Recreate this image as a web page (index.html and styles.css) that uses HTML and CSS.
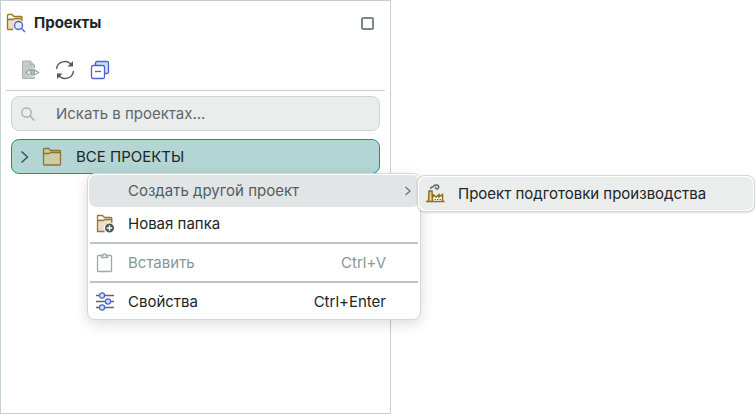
FILE: index.html
```html
<!DOCTYPE html>
<html lang="ru">
<head>
<meta charset="utf-8">
<title>Проекты</title>
<link rel="stylesheet" href="styles.css">
</head>
<body>
<main class="panel">
  <header class="panel-header">
    <svg class="icon-title" width="20" height="20" viewBox="0 0 20 20" fill="none">
      <path d="M2 5h14v5H8v7H2z" fill="#eadfc4"/>
      <path d="M1.500 16.500V2.500q0-1 1-1H6l2 2h7q1 0 1 1V8M1.500 6.500H7l2-1h6.500M1.500 16.500H7" stroke="#9a762b" stroke-width="1.300"/>
      <circle cx="12.500" cy="12.500" r="4" fill="#e4e9fb" stroke="#4a66d0" stroke-width="1.400"/>
      <path d="m15.500 15.500 3.500 3.500" stroke="#4a66d0" stroke-width="1.400"/>
    </svg>
    <h1 class="panel-title">Проекты</h1>
    <button class="icon-button" type="button" aria-label="Развернуть">
      <svg width="13" height="13" viewBox="0 0 13 13" fill="none"><rect x="1" y="1" width="11" height="11" rx="1" stroke="#7c8787" stroke-width="2"/></svg>
    </button>
  </header>
  <div class="toolbar">
    <button class="icon-button" type="button" aria-label="Просмотр" disabled>
      <svg width="20" height="20" viewBox="0 0 20 20" fill="none">
        <path d="M2.500 1h8l4 4v3.500c-4-.5-6.500 1-8.500 4 1.500 2.500 4 4 9 4.200V18.500H2.500z" fill="#c4cbcb"/>
        <path d="M14.500 8V5l-4-4H3q-.5 0-.5.500V18q0 .5.500.5h11.500v-1.500M10.500 1v4h4" stroke="#a9b3b3"/>
        <path d="M6 12.500q5.500-6 12.500 0-6.500 5.500-12.500 0z" fill="#fff" stroke="#9ba6a6" stroke-width="1.200"/>
        <circle cx="12.500" cy="12" r="2" fill="#c4cbcb" stroke="#8c9898" stroke-width="1.200"/>
      </svg>
    </button>
    <button class="icon-button" type="button" aria-label="Обновить">
      <svg width="20" height="20" viewBox="0 0 20 20" fill="none" stroke="#4f5b5c" stroke-width="1.400">
        <path d="M1.500 9a8.300 8.300 0 0 1 15-4M18.500 11a8.300 8.300 0 0 1-15 4"/>
        <path d="M18 1v5.500h-5.500zM2 19v-5.500h5.500z" fill="#4f5b5c" stroke="none"/>
      </svg>
    </button>
    <button class="icon-button" type="button" aria-label="Свернуть все">
      <svg width="20" height="20" viewBox="0 0 20 20" fill="none" stroke="#4a62cf" stroke-width="1.300">
        <rect x="5.500" y="1.500" width="13" height="12" rx="1.500" fill="#d3dcfa"/>
        <rect x="1.500" y="5.500" width="13" height="13" rx="1.500" fill="#fff"/>
        <path d="M5 11.500h6"/>
      </svg>
    </button>
  </div>
  <div class="panel-body">
    <label class="search">
      <svg width="16" height="16" viewBox="0 0 16 16" fill="none" stroke="#a0aaaa" stroke-width="1.200"><circle cx="6.500" cy="6.500" r="4.700"/><path d="m10 10 4.500 4.500"/></svg>
      <input class="search-input" type="text" placeholder="Искать в проектах..." aria-label="Искать в проектах">
    </label>
    <div class="tree">
      <button class="tree-row" type="button">
        <svg width="10" height="14" viewBox="0 0 10 14" fill="none" stroke="#435354" stroke-width="1.500"><path d="m1.500 1.500 6 5.500-6 5.500"/></svg>
        <svg width="20" height="20" viewBox="0 0 20 20" fill="none">
          <path d="M1.500 2q0-.5.500-.5h4.500l2 2h9q1 0 1 1v13.500h-17z" fill="#c9cda9"/>
          <path d="M1.500 17V2.500q0-1 1-1h4l2 2h9q1 0 1 1V17q0 1-1 1h-15q-1 0-1-1zM1.500 6.500h5.500l2-1h9.500" stroke="#8f722c" stroke-width="1.300"/>
        </svg>
        <span>ВСЕ ПРОЕКТЫ</span>
      </button>
      <div class="popup menu" role="menu">
        <button class="item active" type="button" role="menuitem">
          <span class="slot"></span>
          <span class="label">Создать другой проект</span>
          <svg class="arrow" width="8" height="12" viewBox="0 0 8 12" fill="none" stroke="#687374" stroke-width="1.300"><path d="m1.500 2 4.500 4-4.500 4"/></svg>
        </button>
        <button class="item" type="button" role="menuitem">
          <svg class="slot" width="20" height="20" viewBox="0 0 20 20" fill="none">
            <path d="M2 5h13.500v12H2z" fill="#eadfc4"/>
            <path d="M8.500 17.500h-7V2q0-.5.500-.5h4.500l2 2h6.500q.8 0 .8 1V9M1.500 6.500H7l2-1h6.800" stroke="#9a762b" stroke-width="1.300"/>
            <circle cx="13.500" cy="14" r="5" fill="#4c585a" stroke="#fff"/>
            <path d="M10.800 14h5.400M13.500 11.300v5.400" stroke="#fff" stroke-width="1.300"/>
          </svg>
          <span class="label">Новая папка</span>
        </button>
        <hr class="divider">
        <button class="item" type="button" role="menuitem" disabled>
          <svg class="slot" width="20" height="20" viewBox="0 0 20 20" fill="none" stroke="#9eabab" stroke-width="1.300">
            <rect x="1.500" y="2.500" width="14" height="16" rx="1"/>
            <path d="M5.500 2.500v2h6v-2h-1.500a1.500 1.500 0 0 0-3 0z" fill="#fff"/>
          </svg>
          <span class="label">Вставить</span>
          <span class="shortcut">Ctrl+V</span>
        </button>
        <hr class="divider">
        <button class="item" type="button" role="menuitem">
          <svg class="slot" width="20" height="20" viewBox="0 0 20 20" fill="none">
            <path d="M0 3.500h18M0 9.500h18M0 15.500h18" stroke="#5d6869" stroke-width="1.300"/>
            <g fill="#d3dcfa" stroke="#4a62cf" stroke-width="1.200"><circle cx="6" cy="3.500" r="2.600"/><circle cx="12" cy="9.500" r="2.600"/><circle cx="6" cy="15.500" r="2.600"/></g>
          </svg>
          <span class="label">Свойства</span>
          <span class="shortcut">Ctrl+Enter</span>
        </button>
        <div class="popup submenu" role="menu">
          <button class="item" type="button" role="menuitem">
            <svg class="slot" width="20" height="20" viewBox="0 0 20 20" fill="none">
              <path d="M3 17 3.500 7h2L6 17z" fill="#e2d1a1"/>
              <path d="M7 11l3 2 3-2 0 2 3-2v6H7z" fill="#fff"/>
              <path d="M2.500 17.500 3 7h3l.5 10.500M7 13.500V10.500l3 2.500 3-2.500v2.500l3.500-2.500v7M0 17.500h18.500" stroke="#8f6b16" stroke-width="1.500"/>
              <path d="M8.500 15.500h6.500" stroke="#5d6869" stroke-dasharray="1.500 1"/>
              <path d="M4.500 5Q4.500 2.800 7 3 8 .8 10.500 1q2.500.3 2.200 2.500-.7 2-2.700 1.200-.8-1 .5-1.700" stroke="#5a6667" stroke-width="1.400"/>
            </svg>
            <span class="label">Проект подготовки производства</span>
          </button>
        </div>
      </div>
    </div>
  </div>
</main>
</body>
</html>
```
FILE: styles.css
```css
* {
  box-sizing: border-box;
}

body {
  margin: 0;
  background: #fff;
  color: #202627;
  font: 15px/20px Inter, "Liberation Sans", sans-serif;
}

button {
  border: 0;
  padding: 0;
  background: none;
  color: inherit;
  font: inherit;
  text-align: left;
}

svg {
  display: block;
  flex: none;
}

.panel {
  width: 52%;
  max-width: 391px;
  min-height: 100vh;
  border: 1px solid #c4d0cf;
}

.panel-header {
  display: flex;
  align-items: center;
  gap: 8px;
  height: 44px;
  padding: 0 16px 0 5px;
}

.panel-title {
  flex: 1;
  margin: 0;
  font-size: 15px;
  font-weight: 700;
}

.icon-button {
  display: block;
}

.toolbar {
  display: flex;
  align-items: center;
  gap: 15px;
  height: 46px;
  margin: 0 5px;
  padding: 4px 14px 0;
  border-bottom: 1px solid #c4d0cf;
}

.panel-body {
  padding: 5px 10px;
}

.search {
  display: flex;
  align-items: center;
  gap: 20px;
  height: 35px;
  padding: 0 8px;
  border: 1px solid #cbd6d4;
  border-radius: 8px;
  background: #eaedec;
}

.search-input {
  flex: 1;
  min-width: 0;
  border: 0;
  padding: 0;
  background: none;
  font: inherit;
  outline: 0;
}

.search-input::placeholder {
  color: #5f6768;
  opacity: 1;
}

.tree {
  position: relative;
  margin-top: 8px;
}

.tree-row {
  display: flex;
  align-items: center;
  gap: 12px;
  width: 100%;
  height: 35px;
  padding: 0 8px;
  border: 1px solid #1c918b;
  border-radius: 8px;
  background: #b3d5d3;
}

.tree-row span {
  padding-left: 2px;
}

.popup {
  position: absolute;
  border: 1px solid #d3d7d7;
  border-radius: 8px;
  background: #fff;
}

.menu {
  top: 34px;
  left: 76px;
  display: flex;
  flex-direction: column;
  gap: 1px;
  width: 334px;
  padding: 1px;
  box-shadow: 0 4px 14px rgba(0, 0, 0, 0.14);
}

.item {
  display: flex;
  align-items: center;
  gap: 12px;
  width: 100%;
  height: 32px;
  padding: 0 7px;
  border-radius: 7px;
  white-space: nowrap;
}

.item:disabled {
  color: #8b9596;
}

.active {
  background: #e1e5e5;
  color: #555d5e;
}

.slot {
  flex: none;
  width: 20px;
}

.label {
  flex: 1;
}

.shortcut {
  padding-right: 26px;
}

.divider {
  width: calc(100% - 2px);
  height: 2px;
  margin: 1px 1px 2px;
  border: 0;
  background: #bac7c6;
}

.submenu {
  top: 1px;
  left: 329px;
  width: 338px;
  padding: 1px;
  box-shadow: 0 1px 2px rgba(0, 0, 0, 0.14);
}

.submenu .item {
  height: 33px;
  background: #eaedec;
}
```
